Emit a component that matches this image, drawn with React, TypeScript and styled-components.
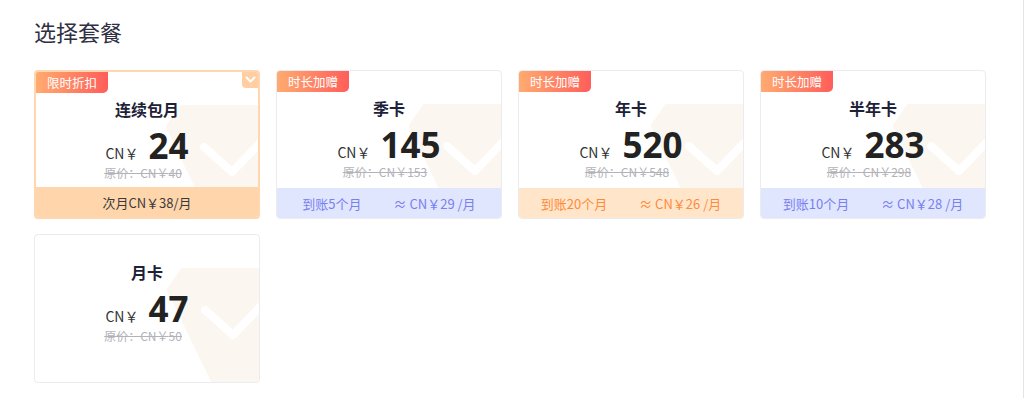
import React from "react";
import styled, { createGlobalStyle, css } from "styled-components";

const GlobalStyle = createGlobalStyle`
  html, body {
    margin: 0;
    padding: 0;
    background: #ffffff;
  }
  body {
    font-family: "Noto Sans CJK SC", "Noto Sans", sans-serif;
    color: #333333;
  }
`;

const Page = styled.div`
  box-sizing: border-box;
  width: 1024px;
  height: 398px;
  padding: 16px 0 0 34px;
  border-right: 1px solid #e4e4e8;
`;

const Heading = styled.h2`
  margin: 0 0 23px;
  font-size: 22px;
  line-height: 31px;
  font-weight: 400;
  color: #2f3042;
`;

const Grid = styled.div`
  display: grid;
  grid-template-columns: repeat(4, 226px);
  row-gap: 15px;
  column-gap: 16px;
`;

const Card = styled.div<{ $selected?: boolean }>`
  position: relative;
  box-sizing: border-box;
  height: 149px;
  display: flex;
  flex-direction: column;
  border-radius: 4px;
  overflow: hidden;
  background: #ffffff;
  border: 1px solid #ebebf0;
  ${(p) =>
    p.$selected &&
    css`
      border: 2px solid #ffd6ae;
    `}
`;

const Badge = styled.span`
  position: absolute;
  top: 0;
  left: 0;
  z-index: 2;
  padding: 0 11px;
  height: 21px;
  line-height: 21px;
  font-size: 12.5px;
  color: #ffffff;
  background: linear-gradient(90deg, #ffab70 0%, #ff5e5a 100%);
  border-bottom-right-radius: 5px;
`;

const Tick = styled.span`
  position: absolute;
  top: 0;
  right: 0;
  z-index: 2;
  width: 16px;
  height: 16px;
  display: flex;
  align-items: center;
  justify-content: center;
  background: #ffcfa3;
  border-bottom-left-radius: 4px;
`;

const Mark = styled.svg`
  position: absolute;
  top: 33px;
  right: -2px;
  z-index: 0;
`;

const Body = styled.div`
  position: relative;
  z-index: 1;
  flex: 1;
  display: flex;
  flex-direction: column;
  align-items: center;
  padding-top: 27px;
`;

const Title = styled.div`
  font-size: 16px;
  line-height: 20px;
  font-weight: 700;
  color: #1e2238;
`;

const PriceRow = styled.div`
  display: flex;
  align-items: baseline;
  margin-top: 9px;
  height: 36px;
`;

const Currency = styled.span`
  font-size: 14px;
  color: #333333;
  margin-right: 10px;
`;

const Amount = styled.span`
  font-family: "Noto Sans", "Noto Sans CJK SC", sans-serif;
  font-size: 35px;
  line-height: 36px;
  font-weight: 700;
  color: #222222;
`;

const Original = styled.div`
  margin: 2px 8px 0 0;
  font-size: 12px;
  line-height: 14px;
  color: #b2b2b8;
  text-decoration: line-through;
`;

const tones = {
  plain: { bg: "#ffd6ab", fg: "#3a3a3a" },
  blue: { bg: "#e1e6ff", fg: "#7880ee" },
  orange: { bg: "#ffe6cb", fg: "#ff8a3a" },
};

type Tone = keyof typeof tones;

const Footer = styled.div<{ $tone: Tone }>`
  position: relative;
  z-index: 1;
  height: 30px;
  display: flex;
  align-items: center;
  justify-content: center;
  gap: 32px;
  font-size: 13px;
  background: ${(p) => tones[p.$tone].bg};
  color: ${(p) => tones[p.$tone].fg};
`;

type Plan = {
  name: string;
  price: number;
  orig: number;
  badge?: string;
  selected?: boolean;
  tone?: Tone;
  footer?: string[];
};

const plans: Plan[] = [
  { name: "连续包月", price: 24, orig: 40, badge: "限时折扣", selected: true, tone: "plain", footer: ["次月CN￥38/月"] },
  { name: "季卡", price: 145, orig: 153, badge: "时长加赠", tone: "blue", footer: ["到账5个月", "≈ CN￥29 /月"] },
  { name: "年卡", price: 520, orig: 548, badge: "时长加赠", tone: "orange", footer: ["到账20个月", "≈ CN￥26 /月"] },
  { name: "半年卡", price: 283, orig: 298, badge: "时长加赠", tone: "blue", footer: ["到账10个月", "≈ CN￥28 /月"] },
  { name: "月卡", price: 47, orig: 50 },
];

const Watermark = () => (
  <Mark width="94" height="118" viewBox="0 0 94 118">
    <polygon
      points="16,3 130,3 130,140 60,140 3,22"
      fill="#fbf7f0"
      stroke="#fbf7f0"
      strokeWidth="6"
      strokeLinejoin="round"
    />
    <polyline
      points="38,42 66,67 95,37"
      fill="none"
      stroke="#ffffff"
      strokeWidth="8"
      strokeLinecap="round"
      strokeLinejoin="round"
    />
  </Mark>
);

const App = () => {
  return (
    <Page>
      <GlobalStyle />
      <Heading>选择套餐</Heading>
      <Grid>
        {plans.map((p) => (
          <Card key={p.name} $selected={p.selected}>
            <Watermark />
            {p.badge && <Badge>{p.badge}</Badge>}
            {p.selected && (
              <Tick>
                <svg width="11" height="8" viewBox="0 0 11 8">
                  <polyline
                    points="1.5,1.5 5.5,5.5 9.5,1.5"
                    fill="none"
                    stroke="#ffffff"
                    strokeWidth="1.8"
                    strokeLinecap="round"
                    strokeLinejoin="round"
                  />
                </svg>
              </Tick>
            )}
            <Body>
              <Title>{p.name}</Title>
              <PriceRow>
                <Currency>CN￥</Currency>
                <Amount>{p.price}</Amount>
              </PriceRow>
              <Original>原价：CN￥{p.orig}</Original>
            </Body>
            {p.footer && (
              <Footer $tone={p.tone || "plain"}>
                {p.footer.map((t) => (
                  <span key={t}>{t}</span>
                ))}
              </Footer>
            )}
          </Card>
        ))}
      </Grid>
    </Page>
  );
};

export default App;
